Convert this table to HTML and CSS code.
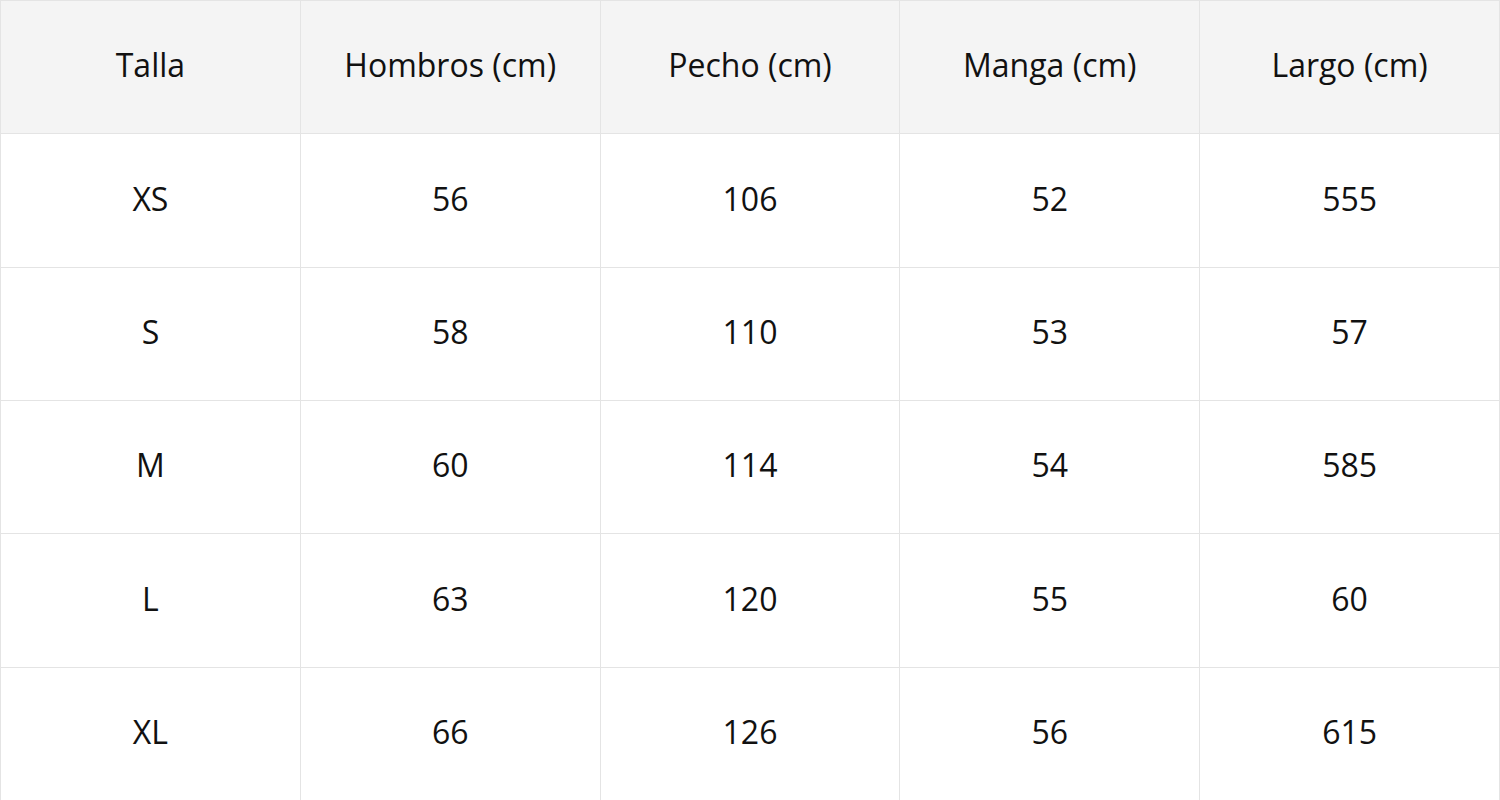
FILE: index.html
```html
<!DOCTYPE html>
<html lang="es">
<head>
<meta charset="utf-8">
<title>Tabla de tallas</title>
<link rel="stylesheet" href="styles.css">
</head>
<body>
<table class="size-table">
  <thead>
    <tr><th>Talla</th><th>Hombros (cm)</th><th>Pecho (cm)</th><th>Manga (cm)</th><th>Largo (cm)</th></tr>
  </thead>
  <tbody>
    <tr><td>XS</td><td>56</td><td>106</td><td>52</td><td>555</td></tr>
    <tr><td>S</td><td>58</td><td>110</td><td>53</td><td>57</td></tr>
    <tr><td>M</td><td>60</td><td>114</td><td>54</td><td>585</td></tr>
    <tr><td>L</td><td>63</td><td>120</td><td>55</td><td>60</td></tr>
    <tr><td>XL</td><td>66</td><td>126</td><td>56</td><td>615</td></tr>
  </tbody>
</table>
</body>
</html>
```
FILE: styles.css
```css
html, body {
  margin: 0;
  padding: 0;
  background: #ffffff;
}
.size-table {
  width: 1500px;
  border-collapse: collapse;
  table-layout: fixed;
  font-family: "Open Sans", sans-serif;
  font-size: 32px;
  color: #111111;
}
.size-table tr {
  height: 133.33px;
}
.size-table th,
.size-table td {
  border: 1px solid #e4e4e4;
  text-align: center;
  vertical-align: middle;
  font-weight: 400;
  padding: 0 0 3px 0;
  line-height: 1.2;
}
.size-table th {
  background: #f4f4f4;
}
```
